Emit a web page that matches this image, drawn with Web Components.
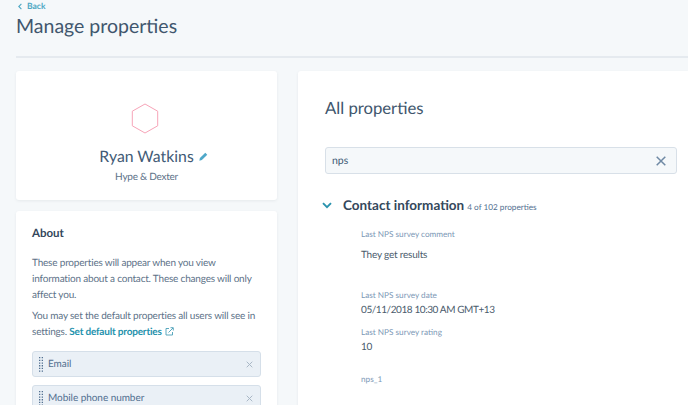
<!DOCTYPE html>
<html>
<head>
<meta charset="utf-8">
<style>
  html, body { margin: 0; height: 405px; overflow: hidden; background: #f5f8fa; }
  body { font-family: Lato, "Open Sans", sans-serif; color: #33475b; text-rendering: geometricPrecision; }
</style>
</head>
<body>
<manage-page>
  <page-header slot="header" back="Back" title="Manage properties"></page-header>
  <profile-card slot="left" name="Ryan Watkins" company="Hype &amp; Dexter"></profile-card>
  <about-card slot="left">
    <prop-chip label="Email"></prop-chip>
    <prop-chip label="Mobile phone number"></prop-chip>
  </about-card>
  <all-properties slot="right">
    <prop-value label="Last NPS survey comment" value="They get results" style="height:61px" gap="8"></prop-value>
    <prop-value label="Last NPS survey date" value="05/11/2018 10:30 AM GMT+13" style="height:37px; --ls:-.42px"></prop-value>
    <prop-value label="Last NPS survey rating" value="10" style="height:47px"></prop-value>
    <prop-value label="nps_1" value=""></prop-value>
  </all-properties>
</manage-page>

<script>
class ManagePage extends HTMLElement {
  constructor() {
    super();
    this.attachShadow({ mode: 'open' }).innerHTML = `
      <style>
        :host { display: block; height: 405px; overflow: hidden; }
        .cols { display: flex; gap: 21px; padding-left: 16px; margin-top: 13px; }
        .left { width: 261px; flex: none; display: flex; flex-direction: column; gap: 11px; }
        .right { flex: 1; min-width: 0; }
      </style>
      <slot name="header"></slot>
      <div class="cols">
        <div class="left"><slot name="left"></slot></div>
        <div class="right"><slot name="right"></slot></div>
      </div>`;
  }
}

class PageHeader extends HTMLElement {
  constructor() {
    super();
    this.attachShadow({ mode: 'open' }).innerHTML = `
      <style>
        :host { display: block; padding-left: 16px; }
        .back { display: flex; align-items: center; gap: 5px; height: 12px; padding-left: 2px; font-size: 8.5px; font-weight: 700; color: #4fa8c4; }
        h1 { margin: 0; font-size: 19.5px; line-height: 30px; font-weight: 400; color: #3f566d; }
        hr { margin: 14px 0 0; border: 0; height: 2px; background: #e5eaef; }
      </style>
      <div class="back">
        <svg width="4" height="7" viewBox="0 0 4 7"><path d="M3.4.8.8 3.5l2.6 2.7" fill="none" stroke="#4fa8c4" stroke-width="1.1"/></svg>
        <span></span>
      </div>
      <h1></h1>
      <hr>`;
    this.shadowRoot.querySelector('span').textContent = this.getAttribute('back');
    this.shadowRoot.querySelector('h1').textContent = this.getAttribute('title');
  }
}

class ProfileCard extends HTMLElement {
  constructor() {
    super();
    this.attachShadow({ mode: 'open' }).innerHTML = `
      <style>
        :host { display: block; height: 129px; background: #fff; border-radius: 3px; box-shadow: 0 1px 3px rgba(45,62,80,.08); text-align: center; }
        svg.hex { display: block; margin-left: 115px; padding-top: 32px; }
        .name { display: flex; justify-content: center; align-items: center; gap: 5px; margin-top: 10px; height: 24px; font-size: 15.8px; color: #425b76; padding-left: 14px; }
        .company { margin-top: 2px; font-size: 10px; line-height: 14px; color: #5d7288; letter-spacing: -.25px; }
      </style>
      <svg class="hex" width="28" height="31" viewBox="0 0 28 31"><path d="M14 1 26.7 8.2V22.8L14 30 1.3 22.8V8.2Z" fill="none" stroke="#f7a4b8" stroke-width="1"/></svg>
      <div class="name"><span id="n"></span>
        <svg width="9" height="9" viewBox="0 0 10 10"><path d="M7 .8 9.2 3 3.2 9 .4 9.7 1 6.8Z" fill="#4fa8c9"/></svg>
      </div>
      <div class="company"></div>`;
    this.shadowRoot.getElementById('n').textContent = this.getAttribute('name');
    this.shadowRoot.querySelector('.company').textContent = this.getAttribute('company');
  }
}

class AboutCard extends HTMLElement {
  constructor() {
    super();
    this.attachShadow({ mode: 'open' }).innerHTML = `
      <style>
        :host { display: block; background: #fff; border-radius: 3px; padding: 15px 16px 20px; box-shadow: 0 1px 3px rgba(45,62,80,.08); }
        h3 { margin: 0; font-size: 11.5px; line-height: 15px; font-weight: 700; color: #33475b; }
        p { margin: 0; font-size: 10px; line-height: 16px; color: #5d7288; letter-spacing: -.19px; }
        p.first { margin-top: 14px; }
        p.second { margin-top: 5px; }
        a { color: #1f92ad; font-weight: 700; text-decoration: none; }
        svg { vertical-align: -1px; margin-left: 1px; }
        .chips { display: flex; flex-direction: column; gap: 8px; margin-top: 11px; }
      </style>
      <h3>About</h3>
      <p class="first">These properties will appear when you view information about a contact. These changes will only affect you.</p>
      <p class="second"><span>You may set the default properties all users will see in</span><br><span>settings.</span> <a>Set default properties</a>
        <svg width="9" height="9" viewBox="0 0 9 9" fill="none" stroke="#4a9fb8" stroke-width=".9"><path d="M4 1.5H1V8H7.5V5"/><path d="M3.5 5.5 8 1M5.5 .7H8.3V3.5"/></svg>
      </p>
      <div class="chips"><slot></slot></div>`;
  }
}

class PropChip extends HTMLElement {
  constructor() {
    super();
    this.attachShadow({ mode: 'open' }).innerHTML = `
      <style>
        :host { display: flex; align-items: center; box-sizing: border-box; height: 26px; background: #eaf0f6; border: 1px solid #d5dfe9; border-radius: 3px; font-size: 10px; color: #516f90; letter-spacing: -.05px; padding: 0 7px 0 6px; }
        .grip { flex: none; display: block; }
        span { flex: 1; margin-left: 5px; }
      </style>
      <svg class="grip" width="4" height="15" viewBox="0 0 4 15" fill="#516f90">
        <path d="M0 0h1.3v1.3H0zM2.7 0H4v1.3H2.7zM0 2.7h1.3V4H0zM2.7 2.7H4V4H2.7zM0 5.4h1.3v1.3H0zM2.7 5.4H4v1.3H2.7zM0 8.1h1.3v1.3H0zM2.7 8.1H4v1.3H2.7zM0 10.8h1.3v1.3H0zM2.7 10.8H4v1.3H2.7zM0 13.5h1.3v1.3H0zM2.7 13.5H4v1.3H2.7z"/>
      </svg>
      <span></span>
      <svg width="7" height="7" viewBox="0 0 7 7"><path d="M.7.7l5.6 5.6M6.3.7.7 6.3" stroke="#a9b8c6" stroke-width="1"/></svg>`;
    this.shadowRoot.querySelector('span').textContent = this.getAttribute('label');
  }
}

class AllProperties extends HTMLElement {
  constructor() {
    super();
    this.attachShadow({ mode: 'open' }).innerHTML = `
      <style>
        :host { display: block; background: #fff; border-radius: 3px 0 0 0; height: 340px; padding: 25px 0 0 27px; box-shadow: 0 1px 3px rgba(45,62,80,.08); }
        h2 { margin: 0; font-size: 16.7px; line-height: 24px; font-weight: 400; color: #3f566d; }
        .search { display: flex; align-items: center; justify-content: space-between; box-sizing: border-box; width: 352px; height: 27px; margin-top: 27px; padding: 0 10px 0 6px; background: #f5f8fa; border: 1px solid #d8e0e8; border-radius: 3px; font-size: 10.5px; color: #425b76; }
        .group { display: flex; align-items: baseline; margin: 23px 0 0 -3px; }
        .group svg { align-self: center; flex: none; margin-right: 11px; }
        .group b { font-size: 13.5px; font-weight: 700; color: #33475b; }
        .group small { margin-left: 3px; font-size: 8.2px; color: #516f90; }
        .props { margin: 15px 0 0 36px; }
      </style>
      <h2>All properties</h2>
      <div class="search"><span>nps</span>
        <svg width="10" height="10" viewBox="0 0 10 10"><path d="M.7.7l8.6 8.6M9.3.7.7 9.3" stroke="#6f89a4" stroke-width="1.5"/></svg>
      </div>
      <div class="group">
        <svg width="10" height="7" viewBox="0 0 10 7"><path d="M1 1.2 5 5.2 9 1.2" fill="none" stroke="#2a93ae" stroke-width="1.9"/></svg>
        <b>Contact information</b><small>4 of 102 properties</small>
      </div>
      <div class="props"><slot></slot></div>`;
  }
}

class PropValue extends HTMLElement {
  constructor() {
    super();
    this.attachShadow({ mode: 'open' }).innerHTML = `
      <style>
        :host { display: block; }
        .label { font-size: 8.2px; line-height: 12px; color: #7c98b6; }
        .value { font-size: 10px; line-height: 14px; color: #4a5b6c; margin-top: 2px; letter-spacing: var(--ls, -.2px); }
      </style>
      <div class="label"></div>
      <div class="value"></div>`;
    const v = this.shadowRoot.querySelector('.value');
    this.shadowRoot.querySelector('.label').textContent = this.getAttribute('label');
    v.textContent = this.getAttribute('value');
    if (this.getAttribute('gap')) v.style.marginTop = this.getAttribute('gap') + 'px';
  }
}

customElements.define('manage-page', ManagePage);
customElements.define('page-header', PageHeader);
customElements.define('profile-card', ProfileCard);
customElements.define('about-card', AboutCard);
customElements.define('prop-chip', PropChip);
customElements.define('all-properties', AllProperties);
customElements.define('prop-value', PropValue);
</script>
</body>
</html>
